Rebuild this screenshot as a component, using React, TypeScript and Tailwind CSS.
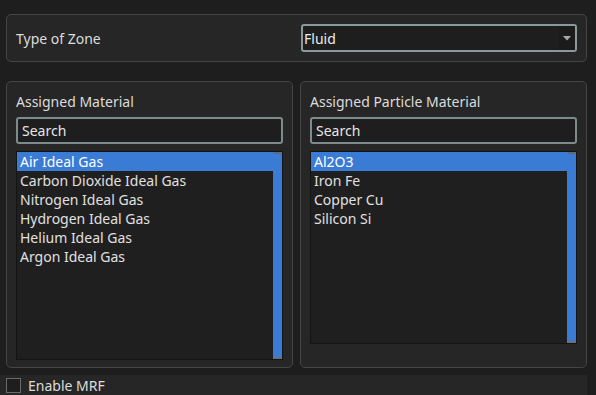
import { useState } from 'react';

const font = { fontFamily: '"Noto Sans", "Open Sans", sans-serif' };

const materials = [
    'Air Ideal Gas',
    'Carbon Dioxide Ideal Gas',
    'Nitrogen Ideal Gas',
    'Hydrogen Ideal Gas',
    'Helium Ideal Gas',
    'Argon Ideal Gas',
];

const particles = ['Al2O3', 'Iron Fe', 'Copper Cu', 'Silicon Si'];

function MaterialList({ title, items, listHeight }: { title: string; items: string[]; listHeight: string }) {
    const [selected, setSelected] = useState(0);

    return (
        <div className="flex h-[287px] w-[287px] flex-col rounded-[5px] border border-[#454545] bg-[#262626] px-[9px] pt-[10px]">
            <div className="h-[19px] text-[14px] leading-[19px] text-[#dcdcdc]">{title}</div>
            {/* search field */}
            <div className="mt-[6px] flex h-[27px] items-center rounded-[3px] border-2 border-[#7d8b8b] bg-[#1e1e1e] px-[4px] text-[14px] text-[#e6e6e6]">
                Search
            </div>
            {/* list with scrollbar */}
            <div className={`mt-[7px] flex border border-[#141414] bg-[#1f1f1f] ${listHeight}`}>
                <div className="flex-1">
                    {items.map((item, i) => (
                        <div
                            key={item}
                            onClick={() => setSelected(i)}
                            className={`h-[19px] pl-[3px] text-[14px] leading-[19px] ${
                                selected === i ? 'bg-[#3a7bd5] text-white' : 'text-[#e0e0e0]'
                            }`}
                        >
                            {item}
                        </div>
                    ))}
                </div>
                <div className="relative w-[9px] bg-[#3a7bd5]">
                    <div className="absolute left-[1px] top-0 h-[2px] w-[7px] bg-[#5a6a7a]" />
                    <div className="absolute bottom-0 left-[1px] h-[2px] w-[7px] bg-[#6a7078]" />
                </div>
            </div>
        </div>
    );
}

export default function App() {
    const [mrf, setMrf] = useState(false);

    return (
        <div className="flex h-[395px] w-[596px] flex-col bg-[#1e1e1e] pt-[14px]" style={font}>
            {/* Type of zone */}
            <div className="mx-[6px] flex h-[48px] w-[581px] items-center rounded-[5px] border border-[#454545] bg-[#262626] pl-[9px] pr-[9px]">
                <span className="flex-1 text-[14px] text-[#dcdcdc]">Type of Zone</span>
                <div className="flex h-[28px] w-[276px] items-center rounded-[3px] border-2 border-[#8a9999] bg-[#1e1e1e] pl-[1px]">
                    <span className="flex-1 text-[14px] text-[#ececec]">Fluid</span>
                    <div className="flex h-full w-[16px] items-center justify-center bg-[#1b1b1b]">
                        <svg width="8" height="5" viewBox="0 0 8 5">
                            <path d="M0 0 H8 L4 4.5 Z" fill="#a8a8a8" />
                        </svg>
                    </div>
                </div>
            </div>

            {/* Material panels */}
            <div className="mx-[6px] mt-[19px] flex gap-[7px]">
                <MaterialList title="Assigned Material" items={materials} listHeight="h-[209px]" />
                <MaterialList title="Assigned Particle Material" items={particles} listHeight="h-[193px]" />
            </div>

            {/* MRF */}
            <div className="mt-[7px] flex h-[20px] w-[587px] items-center bg-[#262626] pl-[6px]">
                <button
                    onClick={() => setMrf(!mrf)}
                    className="flex h-[15px] w-[15px] items-center justify-center border border-[#6a6a6a] bg-[#1e1e1e] text-[11px] leading-none text-white"
                >
                    {mrf ? '✓' : ''}
                </button>
                <span className="ml-[7px] text-[14px] text-[#dcdcdc]">Enable MRF</span>
            </div>
        </div>
    );
}
